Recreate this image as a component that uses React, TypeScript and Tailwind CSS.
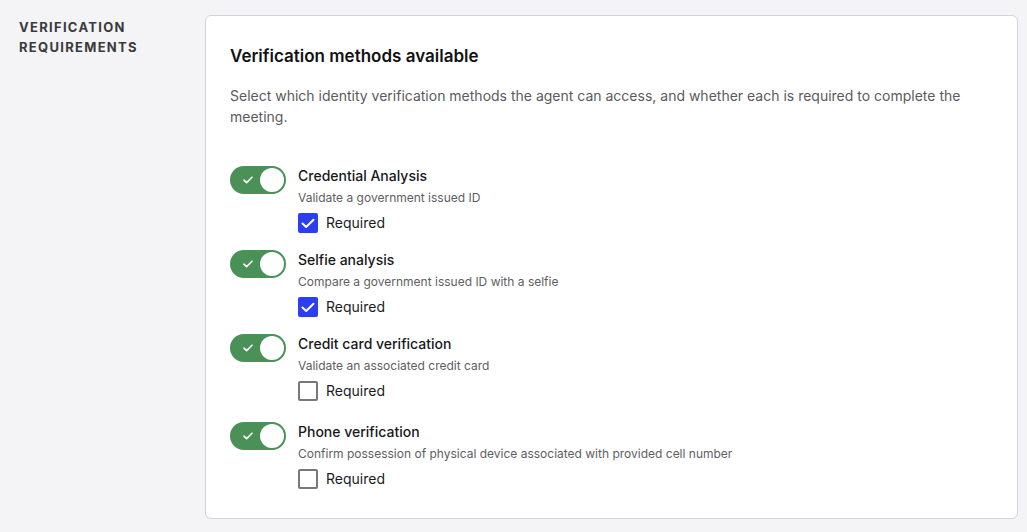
import { useState } from 'react';

type Method = {
  id: string;
  title: string;
  description: string;
  required: boolean;
};

const METHODS: Method[] = [
  { id: 'credential', title: 'Credential Analysis', description: 'Validate a government issued ID', required: true },
  { id: 'selfie', title: 'Selfie analysis', description: 'Compare a government issued ID with a selfie', required: true },
  { id: 'card', title: 'Credit card verification', description: 'Validate an associated credit card', required: false },
  { id: 'phone', title: 'Phone verification', description: 'Confirm possession of physical device associated with provided cell number', required: false },
];

function Toggle({ on, onClick }: { on: boolean; onClick: () => void }) {
  return (
    <button
      type="button"
      onClick={onClick}
      className={`relative flex items-center shrink-0 w-[56px] h-[28px] rounded-full transition-colors ${on ? 'bg-[#4a9157]' : 'bg-[#c4c4c8]'}`}
    >
      {on && (
        <svg className="absolute left-[13px] top-[10px]" width="10" height="8" viewBox="0 0 10 8" fill="none">
          <path d="M1 4.2 3.6 6.6 9 1.2" stroke="white" strokeWidth="1.6" strokeLinecap="round" strokeLinejoin="round" />
        </svg>
      )}
      <span className={`absolute top-[2px] w-[24px] h-[24px] rounded-full bg-white transition-all ${on ? 'left-[30px]' : 'left-[2px]'}`} />
    </button>
  );
}

function Checkbox({ checked, onClick }: { checked: boolean; onClick: () => void }) {
  return (
    <button
      type="button"
      onClick={onClick}
      className={`flex items-center justify-center w-[20px] h-[20px] rounded-[2px] ${checked ? 'bg-[#2b3ef2]' : 'border-2 border-[#77777c] bg-white'}`}
    >
      {checked && (
        <svg width="14" height="11" viewBox="0 0 14 11" fill="none">
          <path d="M1.5 5.5 5.2 9 12.5 1.8" stroke="white" strokeWidth="2" strokeLinecap="round" strokeLinejoin="round" />
        </svg>
      )}
    </button>
  );
}

export default function App() {
  const [enabled, setEnabled] = useState<Record<string, boolean>>({ credential: true, selfie: true, card: true, phone: true });
  const [required, setRequired] = useState<Record<string, boolean>>(
    Object.fromEntries(METHODS.map((m) => [m.id, m.required]))
  );

  return (
    <div className="min-h-[532px] w-full bg-[#f4f4f6] font-['Inter',sans-serif] flex gap-0 pt-[15px] pl-[19px] pr-[9px] pb-[14px]">
      {/* Section label */}
      <div className="w-[186px] shrink-0 pt-[2px]">
        <h2 className="text-[13px] leading-[20px] font-bold uppercase tracking-[0.1em] text-[#3a3a3c]">
          Verification
          <br />
          Requirements
        </h2>
      </div>

      {/* Card */}
      <section className="flex-1 bg-white border border-[#d3d3d8] rounded-[6px] pt-[28px] pl-[24px] pr-[24px] pb-[29px]">
        <h3 className="text-[17px] leading-[24px] font-semibold text-[#121214]">Verification methods available</h3>
        <p className="mt-[17px] text-[14px] leading-[21px] text-[#5a5a5e] max-w-[740px]">
          Select which identity verification methods the agent can access, and whether each is required to complete the meeting.
        </p>

        <div className="mt-[39px] flex flex-col gap-[17px]">
          {METHODS.map((m, i) => (
            <div key={m.id} className={`flex gap-[12px] ${i === 3 ? 'mt-[4px]' : ''}`}>
              <Toggle on={enabled[m.id]} onClick={() => setEnabled({ ...enabled, [m.id]: !enabled[m.id] })} />
              <div className="flex flex-col">
                <span className="text-[14px] leading-[20px] font-medium text-[#18181b]">{m.title}</span>
                <span className="mt-[3px] text-[12px] leading-[18px] text-[#5e5e62]">{m.description}</span>
                <label className="mt-[6px] flex items-center gap-[8px] cursor-pointer">
                  <Checkbox checked={required[m.id]} onClick={() => setRequired({ ...required, [m.id]: !required[m.id] })} />
                  <span className="text-[14px] leading-[20px] text-[#1c1c1f]">Required</span>
                </label>
              </div>
            </div>
          ))}
        </div>
      </section>
    </div>
  );
}
